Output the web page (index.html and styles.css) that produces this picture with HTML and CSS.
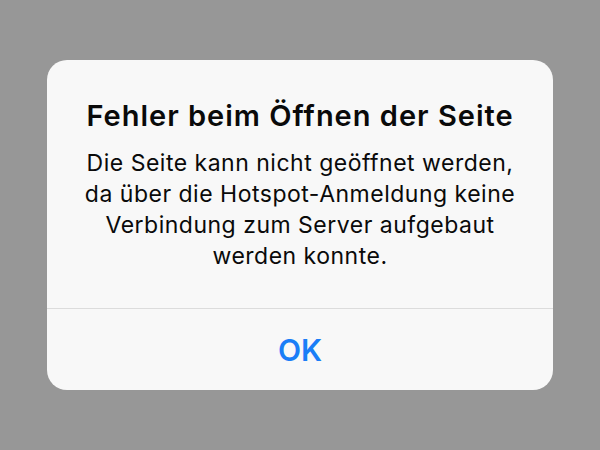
FILE: index.html
```html
<!DOCTYPE html>
<html lang="de">
<head>
<meta charset="utf-8">
<link rel="stylesheet" href="styles.css">
</head>
<body>
<div class="screen">
  <div class="alert">
    <div class="content">
      <h1 class="title">Fehler beim Öffnen der Seite</h1>
      <p class="message">Die Seite kann nicht geöffnet werden, da über die Hotspot-Anmeldung keine Verbindung zum Server aufgebaut werden konnte.</p>
    </div>
    <button class="action">OK</button>
  </div>
</div>
</body>
</html>
```
FILE: styles.css
```css
html, body {
  margin: 0;
  padding: 0;
  width: 600px;
  height: 450px;
  background: #979797;
  overflow: hidden;
}
.screen {
  width: 600px;
  height: 450px;
  padding-top: 60px;
  box-sizing: border-box;
  display: flex;
  justify-content: center;
  align-items: flex-start;
}
.alert {
  width: 506px;
  height: 330px;
  background: #f8f8f8;
  border-radius: 20px;
  display: flex;
  flex-direction: column;
  font-family: Inter, "Noto Sans", sans-serif;
  color: #0a0a0a;
  overflow: hidden;
}
.content {
  height: 249px;
  box-sizing: border-box;
  border-bottom: 1px solid #dcdcdc;
  padding: 38px 30px 0;
  text-align: center;
}
.title {
  margin: 0;
  font-size: 29px;
  font-weight: 600;
  line-height: 36px;
  letter-spacing: 1px;
}
.message {
  margin: 14px 0 0;
  font-size: 23px;
  font-weight: 400;
  line-height: 31px;
  letter-spacing: 0.5px;
}
.action {
  flex: 1;
  border: 0;
  background: transparent;
  font-family: Inter, "Noto Sans", sans-serif;
  font-size: 30px;
  font-weight: 600;
  color: #1a7ef7;
  padding: 0;
}
```
